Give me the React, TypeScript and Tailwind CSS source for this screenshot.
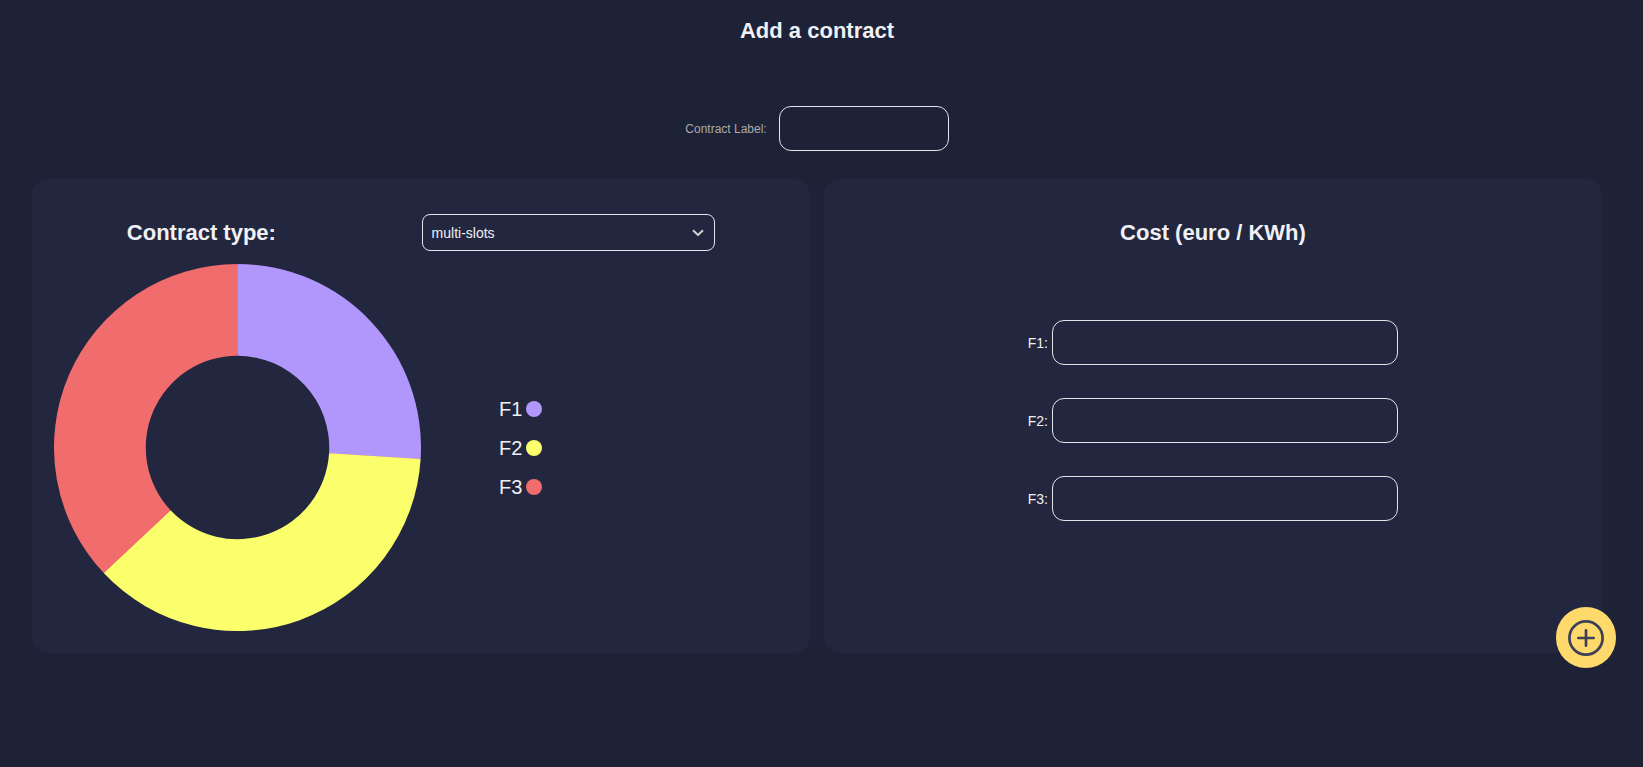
import React, { useState } from "react";

type Slot = { name: string; share: number; color: string; dot: string };

const slots: Slot[] = [
  { name: "F1", share: 26, color: "#b197fc", dot: "bg-[#b197fc]" },
  { name: "F2", share: 37, color: "#fcff6c", dot: "bg-[#fcff6c]" },
  { name: "F3", share: 37, color: "#f16c6c", dot: "bg-[#f16c6c]" },
];

const OUTER = 184;
const INNER = 92;

function point(radius: number, percent: number) {
  const a = (percent / 100) * Math.PI * 2;
  return `${OUTER + radius * Math.sin(a)} ${OUTER - radius * Math.cos(a)}`;
}

function slice(start: number, end: number) {
  const large = end - start > 50 ? 1 : 0;
  return [
    `M${point(OUTER, start)}`,
    `A${OUTER} ${OUTER} 0 ${large} 1 ${point(OUTER, end)}`,
    `L${point(INNER, end)}`,
    `A${INNER} ${INNER} 0 ${large} 0 ${point(INNER, start)}`,
    "Z",
  ].join(" ");
}

function Donut() {
  let start = 0;
  return (
    <svg viewBox="0 0 368 368" className="w-1/2 shrink-0" role="img" aria-label="Slots">
      {/* Backing ring so no gap shows between neighbouring slices */}
      <circle cx="184" cy="184" r="138" fill="none" stroke="#f16c6c" strokeWidth="89" />
      {slots.map((s) => {
        const from = start;
        start += s.share;
        return <path key={s.name} d={slice(from, start)} fill={s.color} />;
      })}
    </svg>
  );
}

function ContractType() {
  const [type, setType] = useState("multi-slots");
  return (
    <section className="flex flex-col rounded-2xl bg-[#22273f] px-[22px] pt-[35px] pb-[22px]">
      <div className="flex items-center justify-around">
        <label htmlFor="type" className="text-[22px] leading-7 font-bold">
          Contract type:
        </label>
        <div className="relative w-2/5">
          <select
            id="type"
            value={type}
            onChange={(e) => setType(e.target.value)}
            className="h-[37px] w-full appearance-none rounded-lg border border-[#e4e5ea] bg-transparent px-[9px] text-sm"
          >
            <option>multi-slots</option>
            <option>mono-slot</option>
          </select>
          <svg
            viewBox="0 0 12 8"
            className="pointer-events-none absolute top-[15px] right-[11px] h-2 w-3"
            fill="none"
            stroke="#cccccc"
            strokeWidth="2.200"
            strokeLinejoin="round"
          >
            <path d="M1 1.300 6 6l5-4.700" />
          </svg>
        </div>
      </div>
      <div className="mt-[13px] flex items-center">
        <Donut />
        <ul className="ml-[78px] flex flex-col gap-[11px]">
          {slots.map((s) => (
            <li key={s.name} className="flex items-center gap-1 text-xl leading-7">
              {s.name}
              <span className={`size-4 rounded-full ${s.dot}`} />
            </li>
          ))}
        </ul>
      </div>
    </section>
  );
}

function Cost() {
  return (
    <section className="flex flex-col items-center rounded-2xl bg-[#22273f] pt-10">
      <h2 className="text-[22px] leading-7 font-bold">Cost (euro / KWh)</h2>
      <div className="mt-[73px] flex w-full flex-col items-center gap-[33px]">
        {slots.map((s) => (
          <div key={s.name} className="flex w-10/21 items-center gap-1">
            <label htmlFor={s.name} className="text-sm">
              {s.name}:
            </label>
            <input
              id={s.name}
              className="h-[45px] min-w-0 flex-1 rounded-xl border border-[#e4e5ea] bg-transparent px-3 text-sm"
            />
          </div>
        ))}
      </div>
    </section>
  );
}

export default function App() {
  return (
    <main className="min-h-screen bg-[#1e2237] pr-[41px] pl-8 font-['Liberation_Sans',Arial,sans-serif] text-[#f0f0f5]">
      <h1 className="pt-[17px] text-center text-[22px] leading-7 font-bold">Add a contract</h1>
      <div className="mt-[61px] flex items-center justify-center gap-3">
        <label htmlFor="label" className="text-xs text-[#aaaaaa]">
          Contract Label:
        </label>
        <input
          id="label"
          className="h-[45px] w-[170px] rounded-xl border border-[#e4e5ea] bg-transparent px-3 text-sm"
        />
      </div>
      <div className="mt-7 grid grid-cols-2 gap-[14px]">
        <ContractType />
        <Cost />
      </div>
      <button
        type="button"
        aria-label="Add contract"
        className="fixed right-[27px] bottom-[99px] flex h-[61px] w-[60px] items-center justify-center rounded-full bg-[#ffd96b]"
      >
        <svg
          viewBox="0 0 36 36"
          className="size-9"
          fill="none"
          stroke="#3c4058"
          strokeWidth="2.700"
          strokeLinecap="round"
        >
          <circle cx="18" cy="18" r="16.600" />
          <path d="M18 10.350v15.300M10.350 18h15.300" />
        </svg>
      </button>
    </main>
  );
}
